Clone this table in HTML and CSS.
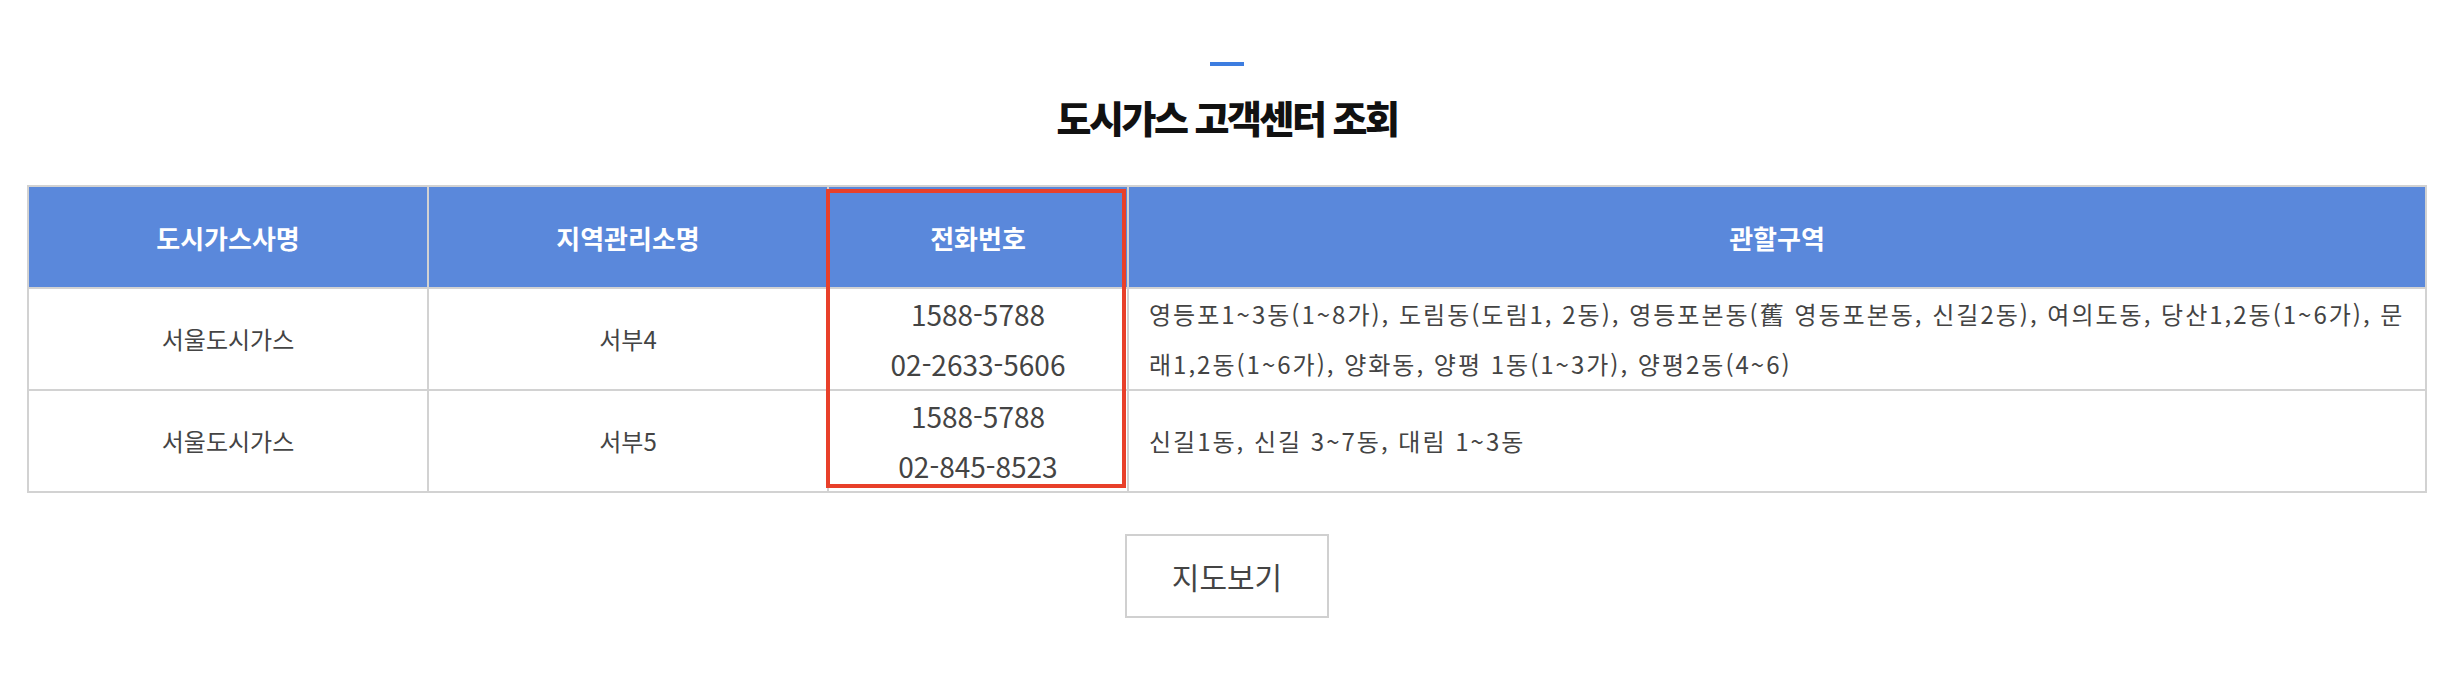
FILE: index.html
```html
<!DOCTYPE html>
<html lang="ko">
  <head>
    <meta charset="UTF-8" />
    <meta name="viewport" content="width=device-width, initial-scale=1.0" />
    <title>도시가스 고객센터 조회</title>
    <link rel="stylesheet" href="styles.css">
  </head>
  <body>
    <div class="wrap">
      <div class="title-bar"></div>
      <h2 class="title">도시가스 고객센터 조회</h2>

      <div class="table-box">
        <table class="gas-table">
          <colgroup>
            <col class="col-company" />
            <col class="col-office" />
            <col class="col-tel" />
            <col />
          </colgroup>
          <thead>
            <tr>
              <th>도시가스사명</th>
              <th>지역관리소명</th>
              <th>전화번호</th>
              <th>관할구역</th>
            </tr>
          </thead>
          <tbody>
            <tr>
              <td>서울도시가스</td>
              <td>서부4</td>
              <td class="tel">1588-5788<br />02-2633-5606</td>
              <td class="area">영등포1~3동(1~8가), 도림동(도림1, 2동), 영등포본동(舊 영동포본동, 신길2동), 여의도동, 당산1,2동(1~6가), 문래1,2동(1~6가), 양화동, 양평 1동(1~3가), 양평2동(4~6)</td>
            </tr>
            <tr>
              <td>서울도시가스</td>
              <td>서부5</td>
              <td class="tel">1588-5788<br />02-845-8523</td>
              <td class="area">신길1동, 신길 3~7동, 대림 1~3동</td>
            </tr>
          </tbody>
        </table>
        <!-- highlight box over the phone column -->
        <div class="highlight"></div>
      </div>

      <div class="btn-area">
        <a class="btn-map" href="#">지도보기</a>
      </div>
    </div>
  </body>
</html>
```

FILE: styles.css
```css
body {
  margin: 0;
  font-family: "Noto Sans CJK KR", sans-serif;
  color: #444;
  background-color: #fff;
}
.wrap {
  padding-top: 62px;
}
.title-bar {
  width: 34px;
  height: 4px;
  margin: 0 auto;
  background-color: #3d7de0;
}
.title {
  margin: 28px 0 0;
  font-size: 38px;
  font-weight: 900;
  line-height: 46px;
  letter-spacing: -2.5px;
  color: #111;
  text-align: center;
}
.table-box {
  position: relative;
  width: 2400px;
  margin: 45px auto 0;
}
.gas-table {
  width: 100%;
  border-collapse: collapse;
  table-layout: fixed;
  border: 2px solid #d2d2d2;
}
.col-company,
.col-office {
  width: 400px;
}
.col-tel {
  width: 300px;
}
.gas-table th,
.gas-table td {
  border: 2px solid #d2d2d2;
  padding: 0;
  text-align: center;
  vertical-align: middle;
}
.gas-table th {
  height: 100px;
  background-color: #5a88db;
  color: #fff;
  font-size: 26px;
  font-weight: 700;
}
.gas-table td {
  height: 100px;
  font-size: 24px;
  line-height: 50px;
}
.gas-table td.tel {
  font-size: 28px;
}
.gas-table td.area {
  text-align: left;
  padding: 0 20px;
  letter-spacing: 2px;
}
.highlight {
  position: absolute;
  left: 799px;
  top: 4px;
  width: 300px;
  height: 299px;
  box-sizing: border-box;
  border: 4px solid #e8402a;
  pointer-events: none;
}
.btn-area {
  margin-top: 41px;
  text-align: center;
}
.btn-map {
  display: inline-flex;
  align-items: center;
  justify-content: center;
  width: 204px;
  height: 84px;
  box-sizing: border-box;
  border: 2px solid #d0d0d0;
  font-size: 30px;
  color: #444;
  text-decoration: none;
}
```
